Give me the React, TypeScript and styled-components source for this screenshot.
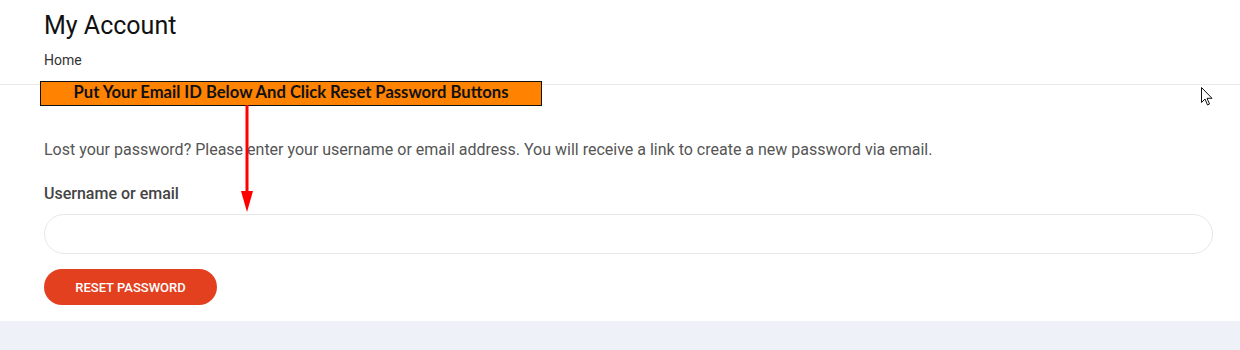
import React, { FC } from 'react';
import styled, { createGlobalStyle } from 'styled-components';

const GlobalStyle = createGlobalStyle`
  html, body {
    margin: 0;
    padding: 0;
    background: #ffffff;
    font-family: Roboto, "Liberation Sans", Arial, sans-serif;
  }
`;

const Page = styled.div`
  position: relative;
  width: 1240px;
  height: 350px;
  overflow: hidden;
  display: flex;
  flex-direction: column;
`;

const PageHeader = styled.header`
  padding: 10px 44px 0;
  height: 85px;
  box-sizing: border-box;
  border-bottom: 1px solid #e9e9e9;
`;

const Title = styled.h1`
  margin: 0;
  font-size: 25px;
  line-height: 32px;
  font-weight: 400;
  color: #111;
`;

const Crumb = styled.div`
  margin-top: 9px;
  font-size: 14px;
  line-height: 18px;
  color: #333;
`;

const Content = styled.main`
  flex: 1;
  padding: 54px 27px 0 44px;
`;

const Intro = styled.p`
  margin: 0;
  font-size: 16px;
  line-height: 22px;
  color: #555;
`;

const Label = styled.label`
  display: block;
  margin-top: 22px;
  font-size: 16px;
  line-height: 22px;
  font-weight: 500;
  color: #444;
`;

const Input = styled.input`
  display: block;
  box-sizing: border-box;
  width: 100%;
  height: 40px;
  margin-top: 9px;
  border: 1px solid #e8e8e8;
  border-radius: 20px;
  background: #fff;
  padding: 0 18px;
  font-size: 14px;
  outline: none;
`;

const ResetButton = styled.button`
  display: block;
  margin-top: 15px;
  width: 173px;
  height: 36px;
  border: none;
  border-radius: 18px;
  background: #e2401f;
  color: #fff;
  font-family: Roboto, "Liberation Sans", Arial, sans-serif;
  font-size: 13px;
  font-weight: 500;
  text-transform: uppercase;
  cursor: pointer;
`;

const Footer = styled.footer`
  height: 29px;
  background: #eef1f8;
`;

const Callout = styled.div`
  position: absolute;
  left: 40px;
  top: 81px;
  width: 502px;
  height: 25px;
  box-sizing: border-box;
  border: 1px solid #111;
  background: #ff8200;
  color: #111;
  font-family: Lato, "Liberation Sans", sans-serif;
  font-weight: 700;
  font-size: 16.6px;
  line-height: 21px;
  text-align: center;
`;

const Arrow = styled.svg`
  position: absolute;
  left: 239px;
  top: 105px;
`;

const Pointer = styled.svg`
  position: absolute;
  left: 1201px;
  top: 87px;
`;

const App: FC = () => (
  <Page>
    <GlobalStyle />
    <PageHeader>
      <Title>My Account</Title>
      <Crumb>Home</Crumb>
    </PageHeader>
    <Content>
      <Intro>
        Lost your password? Please enter your username or email address. You will receive a link
        to create a new password via email.
      </Intro>
      <Label htmlFor="user_login">Username or email</Label>
      <Input id="user_login" type="text" />
      <ResetButton>Reset password</ResetButton>
    </Content>
    <Footer />
    <Callout>Put Your Email ID Below And Click Reset Password Buttons</Callout>
    <Arrow width="16" height="108" viewBox="0 0 16 108">
      <rect x="6.5" y="0" width="3" height="90" fill="#ff0000" />
      <polygon points="2,86 14,86 8,107" fill="#ff0000" />
    </Arrow>
    <Pointer width="14" height="20" viewBox="0 0 14 20">
      <path
        d="M0.5 0.5 L0.5 15.5 L4 12 L6.5 18 L8.5 17 L6 11.3 L11 11.3 Z"
        fill="#fff"
        stroke="#111"
        strokeWidth="1"
      />
    </Pointer>
  </Page>
);

export default App;
